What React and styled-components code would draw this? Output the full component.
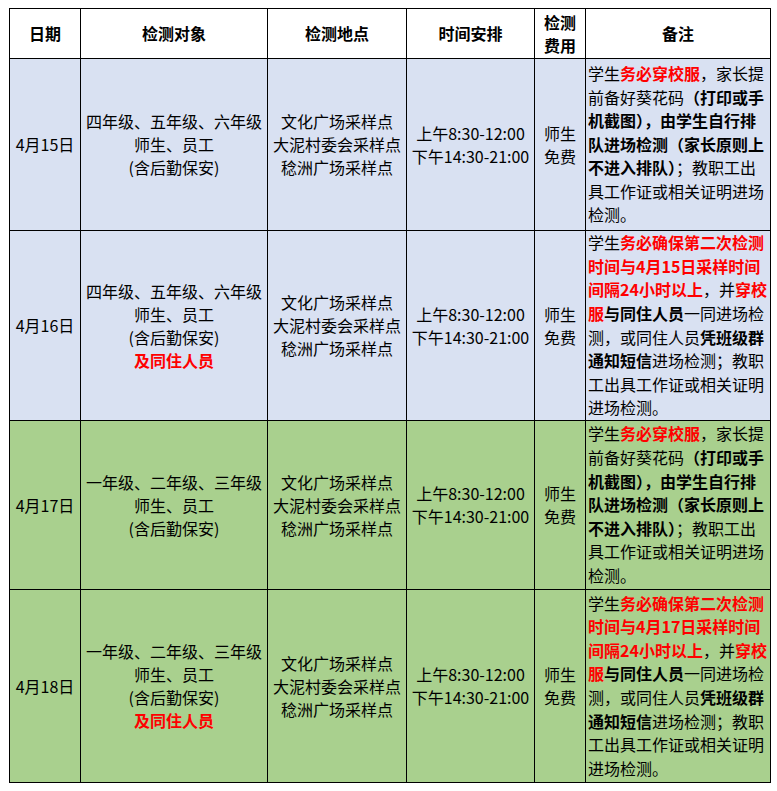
import React from "react";
import styled, { createGlobalStyle } from "styled-components";

const Global = createGlobalStyle`
  html, body { margin: 0; padding: 0; background: #ffffff; }
  body {
    padding: 8px 0 0 9px;
    font-family: "Noto Sans CJK SC", "Microsoft YaHei", "Noto Sans", sans-serif;
    color: #000;
  }
`;

const Table = styled.div`
  display: grid;
  grid-template-columns: 71px 187px 139px 128px 51px 185px;
  grid-template-rows: 50px 172px 190px 169px 193px;
  width: 762px;
  box-sizing: border-box;
  border-left: 1px solid #000;
  border-top: 1px solid #000;
`;

const Cell = styled.div`
  box-sizing: border-box;
  border-right: 1px solid #000;
  border-bottom: 1px solid #000;
  background: ${(p) => p.$bg || "#ffffff"};
  display: flex;
  align-items: center;
  justify-content: ${(p) => (p.$left ? "flex-start" : "center")};
  padding: ${(p) => (p.$left ? "0 0 0 2px" : "0")};
  font-size: 16px;
  overflow: hidden;
`;

const Text = styled.div`
  text-align: ${(p) => (p.$left ? "left" : "center")};
  line-height: ${(p) => (p.$left ? "23.6px" : "23px")};
  font-weight: ${(p) => (p.$head ? 700 : 400)};
  white-space: nowrap;
`;

const Hot = styled.span`
  color: #ff0000;
  font-weight: 700;
`;

const Strong = styled.span`
  font-weight: 700;
`;

const BLUE = "#d9e1f2";
const GREEN = "#a9d08e";

const headers = ["日期", "检测对象", "检测地点", "时间安排", <>检测<br />费用</>, "备注"];

const Places = () => (
  <>文化广场采样点<br />大泥村委会采样点<br />稔洲广场采样点</>
);
const Times = () => (
  <>上午8:30-12:00<br />下午14:30-21:00</>
);
const Fee = () => (
  <>师生<br />免费</>
);

const RemarkA = () => (
  <>
    学生<Hot>务必穿校服</Hot>，家长提<br />
    前备好葵花码<Strong>（打印或手</Strong><br />
    <Strong>机截图），由学生自行排</Strong><br />
    <Strong>队进场检测（家长原则上</Strong><br />
    <Strong>不进入排队）</Strong>；教职工出<br />
    具工作证或相关证明进场<br />
    检测。
  </>
);

const RemarkB = ({ date }) => (
  <>
    学生<Hot>务必确保第二次检测</Hot><br />
    <Hot>时间与{date}采样时间</Hot><br />
    <Hot>间隔24小时以上</Hot>，并<Hot>穿校</Hot><br />
    <Hot>服</Hot><Strong>与同住人员</Strong>一同进场检<br />
    测，或同住人员<Strong>凭班级群</Strong><br />
    <Strong>通知短信</Strong>进场检测；教职<br />
    工出具工作证或相关证明<br />
    进场检测。
  </>
);

const rows = [
  { date: "4月15日", grades: "四年级、五年级、六年级", family: false, bg: BLUE, remark: <RemarkA /> },
  { date: "4月16日", grades: "四年级、五年级、六年级", family: true, bg: BLUE, remark: <RemarkB date="4月15日" /> },
  { date: "4月17日", grades: "一年级、二年级、三年级", family: false, bg: GREEN, remark: <RemarkA /> },
  { date: "4月18日", grades: "一年级、二年级、三年级", family: true, bg: GREEN, remark: <RemarkB date="4月17日" /> },
];

export default function App() {
  return (
    <>
      <Global />
      <Table>
        {headers.map((h, i) => (
          <Cell key={"h" + i}>
            <Text $head>{h}</Text>
          </Cell>
        ))}
        {rows.map((r) => (
          <React.Fragment key={r.date}>
            <Cell $bg={r.bg}>
              <Text>{r.date}</Text>
            </Cell>
            <Cell $bg={r.bg}>
              <Text>
                {r.grades}
                <br />
                师生、员工
                <br />
                (含后勤保安)
                {r.family && (
                  <>
                    <br />
                    <Hot>及同住人员</Hot>
                  </>
                )}
              </Text>
            </Cell>
            <Cell $bg={r.bg}>
              <Text>
                <Places />
              </Text>
            </Cell>
            <Cell $bg={r.bg}>
              <Text>
                <Times />
              </Text>
            </Cell>
            <Cell $bg={r.bg}>
              <Text>
                <Fee />
              </Text>
            </Cell>
            <Cell $bg={r.bg} $left>
              <Text $left>{r.remark}</Text>
            </Cell>
          </React.Fragment>
        ))}
      </Table>
    </>
  );
}
